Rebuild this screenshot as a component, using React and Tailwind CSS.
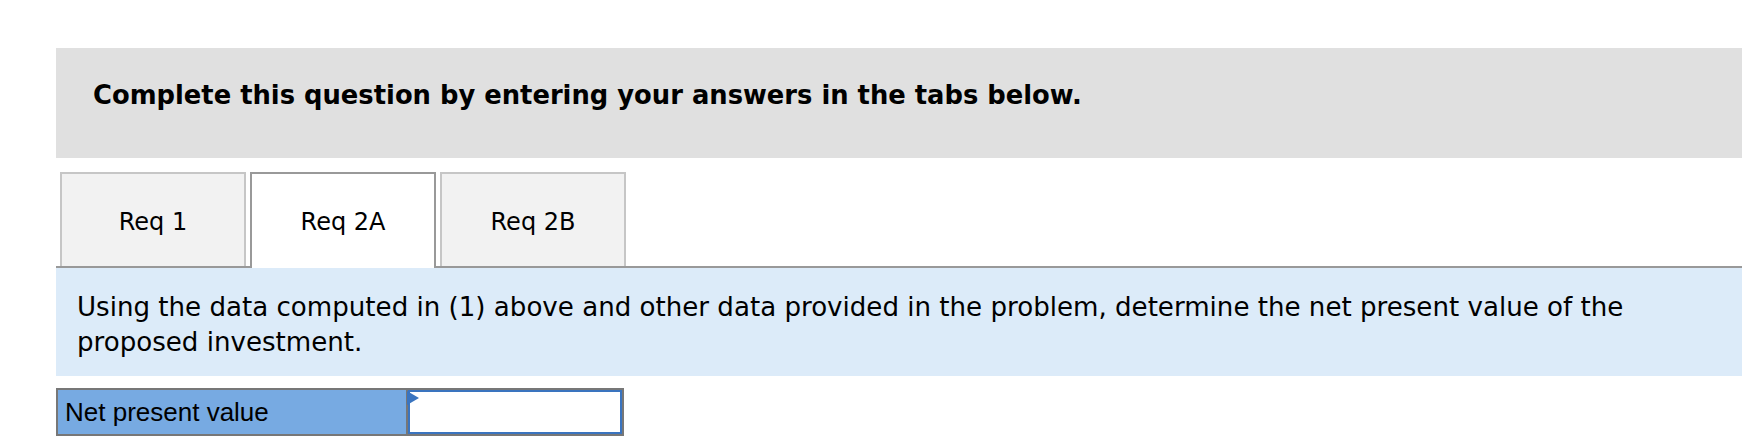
const tabs = ["Req 1", "Req 2A", "Req 2B"];

const App = () => {
  const active = 1;

  return (
    <div className="min-h-[441px] bg-white pl-[56px] pt-[48px] font-['DejaVu_Sans',sans-serif] text-black">
      {/* Instructions banner */}
      <div className="h-[110px] bg-[#e0e0e0] pl-[37px] pt-[29px]">
        <p className="text-[25.8px] font-bold leading-[36px]">
          Complete this question by entering your answers in the tabs below.
        </p>
      </div>

      {/* Tabs */}
      <div className="mt-[14px] flex h-[96px] items-end gap-[4px] border-b-2 border-[#999999] pl-[4px]">
        {tabs.map((t, i) =>
          i === active ? (
            <div
              key={t}
              className="relative z-10 -mb-[2px] flex h-[96px] w-[186px] items-center justify-center border-2 border-b-0 border-[#999999] bg-white pt-[2px] text-[24px]">
              {t}
            </div>
          ) : (
            <div
              key={t}
              className="flex h-[94px] w-[186px] items-center justify-center border-2 border-b-0 border-[#c6c6c6] bg-[#f2f2f2] pt-[4px] text-[24px]">
              {t}
            </div>
          )
        )}
      </div>

      {/* Question text */}
      <div className="h-[108px] bg-[#dcebf9] pl-[21px] pr-[60px] pt-[22px]">
        <p className="text-[26.1px] leading-[35px]">
          Using the data computed in (1) above and other data provided in the problem, determine the net present value of the proposed investment.
        </p>
      </div>

      {/* Answer row */}
      <div className="mt-[12px] flex h-[48px] w-[568px] border-2 border-[#777777]">
        <div className="flex w-[348px] items-center bg-[#77aae2] pl-[7px] font-['Liberation_Sans',Arial,sans-serif] text-[26px]">
          Net present value
        </div>
        <div className="relative flex-1 border-l-2 border-[#777777]">
          <div className="h-full w-full border-2 border-[#3a74bf] bg-white" />
          <svg className="absolute -left-[1px] top-[1px]" width="13" height="14" viewBox="0 0 13 14">
            <polygon points="0,0 12,7 0,14" fill="#3a74bf" />
          </svg>
        </div>
      </div>
    </div>
  );
};

export default App;
